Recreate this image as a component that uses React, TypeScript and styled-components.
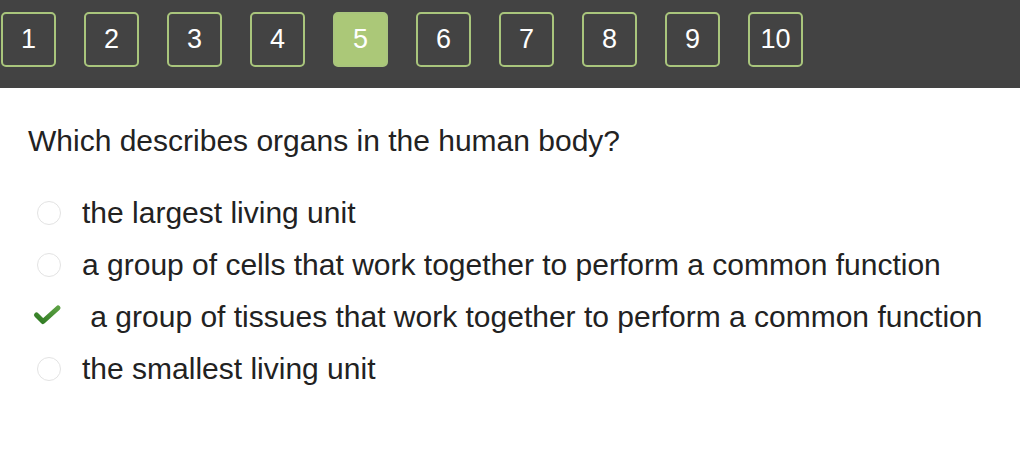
import * as React from 'react';
import styled, { createGlobalStyle } from 'styled-components';

const GlobalStyle = createGlobalStyle`
  body {
    margin: 0;
    background: #ffffff;
    font-family: "Liberation Sans", Arial, sans-serif;
  }
`;

const Container = styled.div`
  width: 1020px;
  height: 466px;
  background: #ffffff;
  overflow: hidden;
`;

const TopBar = styled.div`
  align-items: center;
  background: #434343;
  display: flex;
  gap: 28px;
  height: 88px;
  padding: 0 0 0 1px;
  box-sizing: border-box;
`;

const PageButton = styled.div<{ $active?: boolean }>`
  align-items: center;
  background: ${props => (props.$active ? '#abc878' : 'transparent')};
  border: 2px solid #a9c57c;
  border-radius: 5px;
  box-sizing: border-box;
  color: #ffffff;
  display: flex;
  flex-shrink: 0;
  font-size: 27px;
  height: 55px;
  justify-content: center;
  margin-top: -10px;
  width: 55px;
`;

const Content = styled.div`
  padding: 33px 0 0 28px;
`;

const Question = styled.div`
  color: #222222;
  font-size: 30px;
  line-height: 40px;
  margin-bottom: 26px;
`;

const OptionList = styled.div`
  display: flex;
  flex-direction: column;
`;

const Option = styled.div`
  align-items: center;
  display: flex;
  height: 52px;
`;

const Marker = styled.div`
  align-items: center;
  display: flex;
  height: 30px;
  justify-content: center;
  margin-left: 6px;
  width: 30px;
`;

const Radio = styled.div`
  border: 1px solid #e3e3e3;
  border-radius: 50%;
  box-sizing: border-box;
  height: 24px;
  width: 24px;
`;

const OptionText = styled.span`
  color: #222222;
  font-size: 30px;
  margin-left: 18px;
  white-space: pre;
`;

const Check = () => (
  <svg width="30" height="30" viewBox="0 0 30 30" style={{ marginLeft: -4 }}>
    <defs>
      <linearGradient id="chk" x1="0" y1="1" x2="1" y2="0">
        <stop offset="0" stopColor="#2f7a22" />
        <stop offset="1" stopColor="#5ba043" />
      </linearGradient>
    </defs>
    <polyline
      points="4.5,13 11,19.5 26,6"
      fill="none"
      stroke="url(#chk)"
      strokeWidth="5"
      strokeLinecap="round"
      strokeLinejoin="round"
    />
  </svg>
);

const options = [
  { text: 'the largest living unit', correct: false },
  { text: 'a group of cells that work together to perform a common function', correct: false },
  { text: ' a group of tissues that work together to perform a common function', correct: true },
  { text: 'the smallest living unit', correct: false },
];

const App = () => {
  return (
    <Container>
      <GlobalStyle />
      <TopBar>
        {[1, 2, 3, 4, 5, 6, 7, 8, 9, 10].map(n => (
          <PageButton key={n} $active={n === 5}>
            {n}
          </PageButton>
        ))}
      </TopBar>
      <Content>
        <Question>Which describes organs in the human body?</Question>
        <OptionList>
          {options.map(o => (
            <Option key={o.text}>
              <Marker>{o.correct ? <Check /> : <Radio />}</Marker>
              <OptionText>{o.text}</OptionText>
            </Option>
          ))}
        </OptionList>
      </Content>
    </Container>
  );
};

export default App;
